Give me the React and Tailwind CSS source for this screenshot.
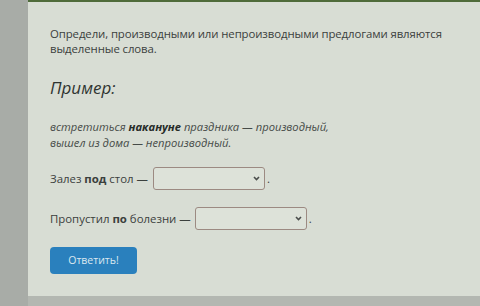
import React from "react";

function Select({ width }) {
  return (
    <div
      className={`flex h-[23px] items-center justify-end rounded-[3px] border border-[#9c8a82] bg-[#dde2d9] pr-[4px] ${width}`}
    >
      <svg width="7" height="5" viewBox="0 0 7 5" fill="none">
        <path d="M1 1l2.5 2.5L6 1" stroke="#4a4d4b" strokeWidth="1.6" />
      </svg>
    </div>
  );
}

export default function App() {
  return (
    <div
      className="flex h-[306px] w-[480px] bg-[#b3b7b1] text-[#3b403d]"
      style={{ fontFamily: '"Open Sans", "Noto Sans", sans-serif' }}
    >
      <div className="w-[28px] shrink-0 bg-[#a8aca7]" />
      <div className="flex h-[296px] flex-1 flex-col">
        <div className="h-[2px] bg-[#4f6b3a]" />
        <div className="flex-1 bg-[#d8ddd4] pl-[22px] pt-[24px]">
          <p className="text-[11.4px] leading-[15px] tracking-[-0.1px]">
            Определи, производными или непроизводными предлогами являются
            <br />
            выделенные слова.
          </p>

          <div className="mt-[22px] text-[17px] italic leading-[20px] text-[#2f3431]">
            Пример:
          </div>

          <p className="mt-[21px] text-[11.2px] italic leading-[16px] text-[#464b48]">
            встретиться <b className="text-[#262b28]">накануне</b> праздника —
            производный,
            <br />
            вышел из дома — непроизводный.
          </p>

          <div className="mt-[16px] flex items-center text-[11.4px]">
            <span>
              Залез <b>под</b> стол —
            </span>
            <div className="ml-[5px]">
              <Select width="w-[112px]" />
            </div>
            <span className="ml-[2px]">.</span>
          </div>

          <div className="mt-[17px] flex items-center text-[11.4px]">
            <span>
              Пропустил <b>по</b> болезни —
            </span>
            <div className="ml-[4px]">
              <Select width="w-[112px]" />
            </div>
            <span className="ml-[2px]">.</span>
          </div>

          <button className="mt-[17px] flex h-[27px] w-[87px] items-center justify-center rounded-[4px] bg-[#2a80bd] text-[10.5px] text-[#dbe8f0]">
            Ответить!
          </button>
        </div>
      </div>
    </div>
  );
}
